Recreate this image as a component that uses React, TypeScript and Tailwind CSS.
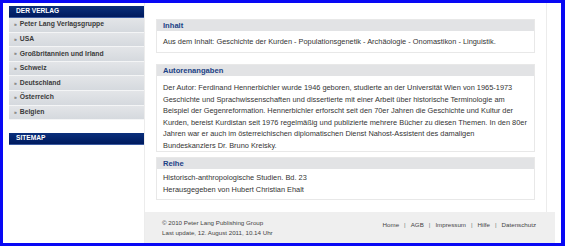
const navItems = [
  "Peter Lang Verlagsgruppe",
  "USA",
  "Großbritannien und Irland",
  "Schweiz",
  "Deutschland",
  "Österreich",
  "Belgien",
];

const footerLinks = ["Home", "AGB", "Impressum", "Hilfe", "Datenschutz"];

function SideHeader({ label }: { label: string }) {
  return (
    <div className="flex h-[12px] items-center border-b border-[#3a5aa0] bg-gradient-to-b from-[#0b2f7c] to-[#001a5e] pl-[7px] text-[6.6px] font-bold uppercase leading-none text-white">
      {label}
    </div>
  );
}

function Panel({ title, className, children }: { title: string; className: string; children: React.ReactNode }) {
  return (
    <div className={`border border-[#e8e8e8] bg-white ${className}`}>
      <div className="flex h-[11px] items-center bg-[#e2e3e5] pl-[6px] text-[7.6px] font-bold leading-none text-[#1b4286]">
        {title}
      </div>
      <div className="whitespace-nowrap px-[6px] text-[7.4px] leading-[11.5px] text-[#333]">{children}</div>
    </div>
  );
}

export default function App() {
  return (
    <div
      className="flex h-[246px] w-[565px] bg-[#0808f4] pb-[3px] pl-[3px] pr-[4px] pt-[3px]"
      style={{ fontFamily: '"Liberation Sans", Arial, sans-serif' }}
    >
      <div className="flex flex-1 bg-white">
        {/* sidebar */}
        <div className="ml-[6px] flex w-[136px] flex-col border-r border-[#ececec] pt-[3px]">
          <SideHeader label="Der Verlag" />
          <div className="flex flex-col">
            {navItems.map((item) => (
              <div
                key={item}
                className="flex h-[14.6px] items-center gap-[3px] border-b border-[#f4f5f6] bg-gradient-to-b from-[#e3e5e8] to-[#d5d9de] pl-[5px] text-[6.8px] font-bold leading-none text-[#3a3a3a]"
              >
                <span className="text-[5px] text-[#666]">»</span>
                {item}
              </div>
            ))}
          </div>
          <div className="mt-[13px]">
            <SideHeader label="Sitemap" />
          </div>
        </div>

        {/* main */}
        <div className="flex flex-1 flex-col">
          <div className="flex w-[402px] flex-1 flex-col border-r border-[#ececec] px-[11px] pt-[16px]">
            <Panel title="Inhalt" className="">
              <div className="h-[21px] pt-[5px]">
                Aus dem Inhalt: Geschichte der Kurden - Populationsgenetik - Archäologie - Onomastikon - Linguistik.
              </div>
            </Panel>
            <Panel title="Autorenangaben" className="mt-[11px]">
              <div className="pt-[6px]">
                Der Autor: Ferdinand Hennerbichler wurde 1946 geboren, studierte an der Universität Wien von 1965-1973
                <br />
                Geschichte und Sprachwissenschaften und dissertierte mit einer Arbeit über historische Terminologie am
                <br />
                Beispiel der Gegenreformation. Hennerbichler erforscht seit den 70er Jahren die Geschichte und Kultur der
                <br />
                Kurden, bereist Kurdistan seit 1976 regelmäßig und publizierte mehrere Bücher zu diesen Themen. In den 80er
                <br />
                Jahren war er auch im österreichischen diplomatischen Dienst Nahost-Assistent des damaligen
                <br />
                Bundeskanzlers Dr. Bruno Kreisky.
              </div>
            </Panel>
            <Panel title="Reihe" className="mt-[5px]">
              <div className="pb-[4px] pt-[3px]">
                Historisch-anthropologische Studien. Bd. 23
                <br />
                Herausgegeben von Hubert Christian Ehalt
              </div>
            </Panel>
          </div>
          <div className="mr-[6px] flex h-[31px] shrink-0 items-center justify-between bg-[#efefef] pl-[17px] pr-[19px] text-[6.2px] leading-[10px] text-[#444]">
            <div>
              © 2010 Peter Lang Publishing Group
              <br />
              Last update, 12. August 2011, 10.14 Uhr
            </div>
            <div className="mb-[5px] flex gap-[5px]">
              {footerLinks.map((l, i) => (
                <span key={l} className="flex gap-[5px]">
                  {i > 0 && <span className="text-[#777]">|</span>}
                  {l}
                </span>
              ))}
            </div>
          </div>
        </div>
      </div>
    </div>
  );
}
